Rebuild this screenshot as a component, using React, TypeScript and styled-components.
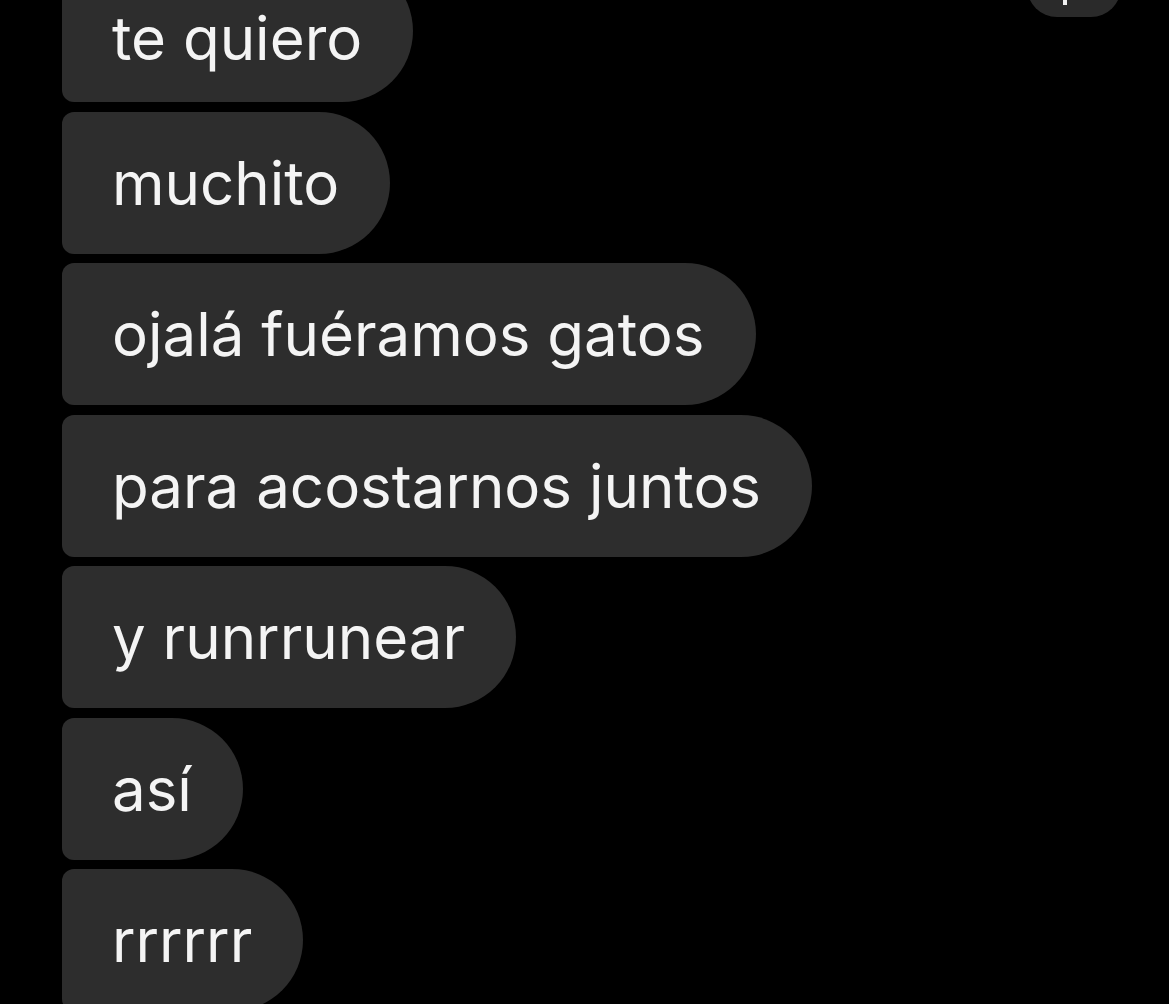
import React from "react";
import styled, { createGlobalStyle } from "styled-components";

const Global = createGlobalStyle`
  html, body {
    margin: 0;
    padding: 0;
    background: #000;
    overflow: hidden;
  }
  body {
    font-family: Inter, "Liberation Sans", sans-serif;
  }
`;

const Screen = styled.div`
  position: relative;
  width: 1169px;
  height: 1004px;
  background: #000;
  overflow: hidden;
`;

const Thread = styled.div`
  display: flex;
  flex-direction: column;
  align-items: flex-start;
  gap: 9.5px;
  padding-left: 62px;
  margin-top: -40px;
`;

const Bubble = styled.div<{ $shift?: number }>`
  box-sizing: border-box;
  height: 142px;
  display: flex;
  align-items: center;
  padding: ${(p) => (p.$shift ?? 0) * 2}px 51px 0 50px;
  background: #2d2d2d;
  border-radius: 12px 71px 71px 12px;
  color: #f4f4f4;
  font-size: 60px;
  font-weight: 400;
  letter-spacing: 0;
  white-space: nowrap;
`;

const TopPill = styled.div`
  position: absolute;
  top: -43px;
  left: 1027px;
  width: 94px;
  height: 60px;
  border-radius: 30px;
  background: #2a2a2a;
  display: flex;
  justify-content: flex-start;
  padding-left: 36px;
  box-sizing: border-box;
`;

const PillMark = styled.span`
  display: block;
  width: 4px;
  height: 5px;
  margin-top: 43px;
  background: #f0f0f0;
`;

const messages = [
  "te quiero",
  "muchito",
  "ojalá fuéramos gatos",
  "para acostarnos juntos",
  "y runrrunear",
  "así",
  "rrrrrr",
];

export default function App() {
  return (
    <Screen>
      <Global />
      <Thread>
        {messages.map((m, i) => (
          <Bubble key={i} $shift={i === 0 ? 7 : 0}>
            {m}
          </Bubble>
        ))}
      </Thread>
      <TopPill>
        <PillMark />
      </TopPill>
    </Screen>
  );
}
